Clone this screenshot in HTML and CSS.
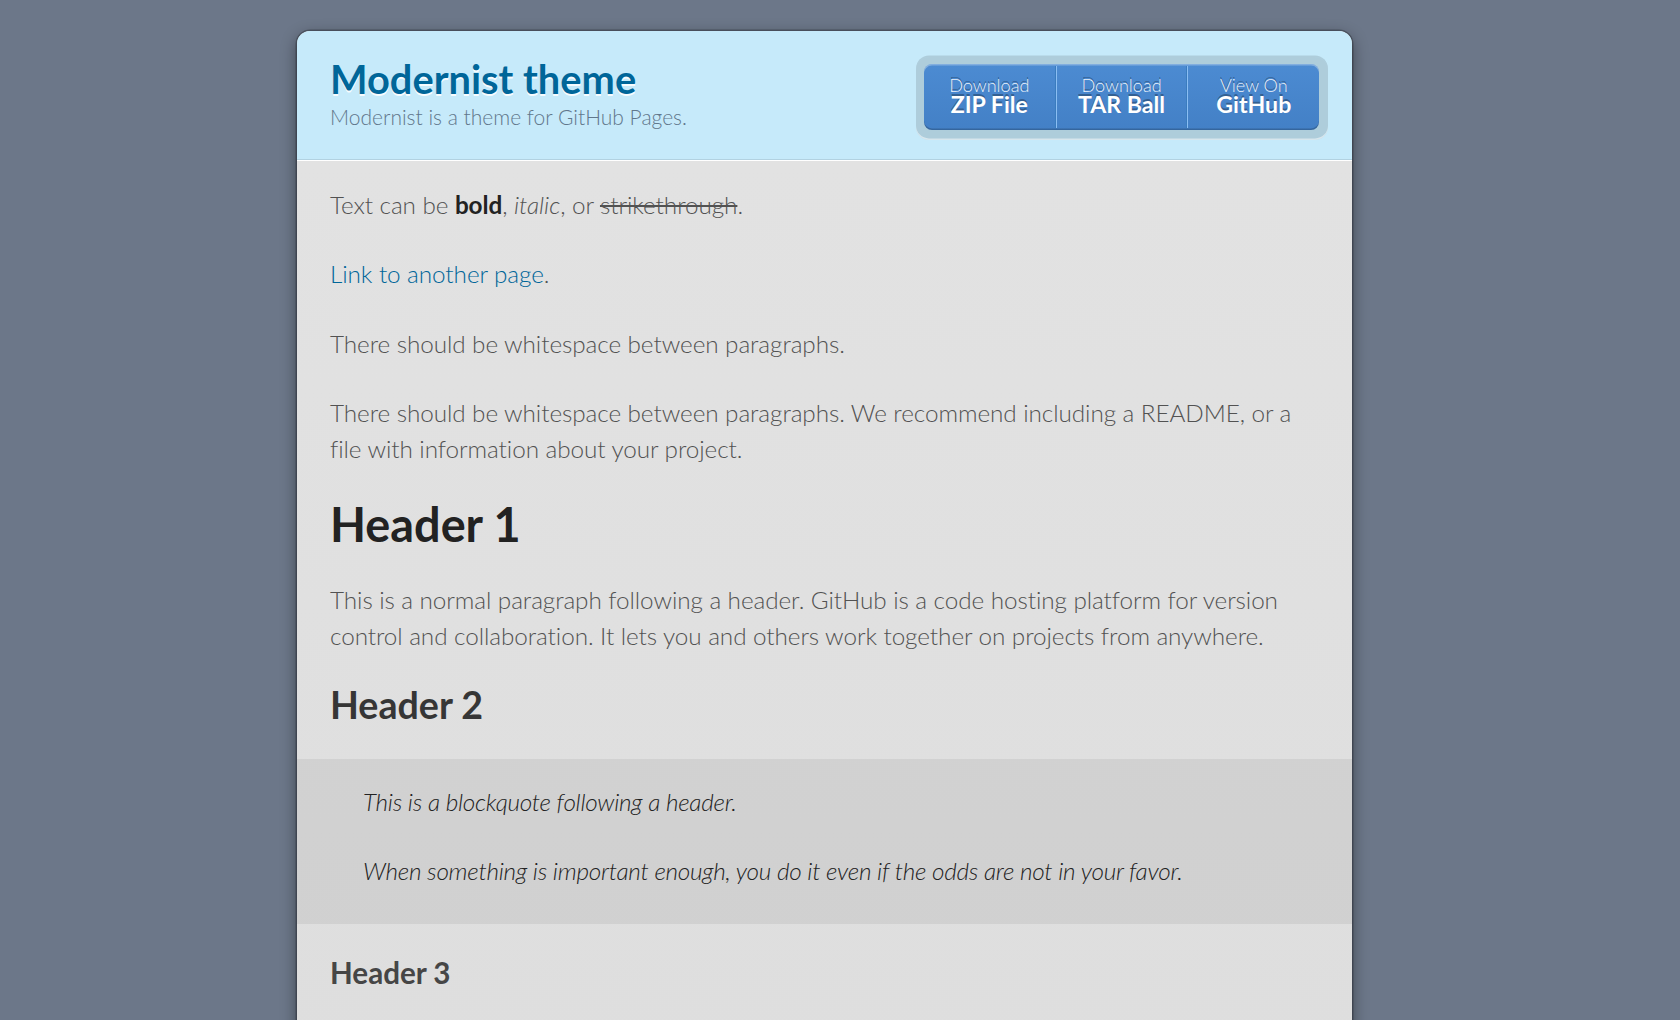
FILE: index.html
```html
<!DOCTYPE html>
<html lang="en">
<head>
<meta charset="utf-8">
<title>Modernist theme</title>
<link rel="stylesheet" href="styles.css">
</head>
<body>
<div class="wrapper">
  <header class="site-header">
    <div class="brand">
      <h1 class="site-title">Modernist theme</h1>
      <p class="site-desc">Modernist is a theme for GitHub Pages.</p>
    </div>
    <div class="downloads-frame">
      <ul class="downloads">
        <li class="dl dl-first"><a href="#"><span class="dl-small">Download</span><strong>ZIP File</strong></a></li>
        <li class="dl dl-mid"><a href="#"><span class="dl-small">Download</span><strong>TAR Ball</strong></a></li>
        <li class="dl dl-last"><a href="#"><span class="dl-small">View On</span><strong>GitHub</strong></a></li>
      </ul>
    </div>
  </header>
  <section class="content">
    <p>Text can be <strong>bold</strong>, <em>italic</em>, or <del>strikethrough</del>.</p>
    <p><a href="#">Link to another page</a>.</p>
    <p>There should be whitespace between paragraphs.</p>
    <p>There should be whitespace between paragraphs. We recommend including a README, or a file with information about your project.</p>
    <h1 class="h1">Header 1</h1>
    <p>This is a normal paragraph following a header. GitHub is a code hosting platform for version control and collaboration. It lets you and others work together on projects from anywhere.</p>
    <h2 class="h2">Header 2</h2>
    <blockquote class="quote">
      <p>This is a blockquote following a header.</p>
      <p>When something is important enough, you do it even if the odds are not in your favor.</p>
    </blockquote>
    <h3 class="h3">Header 3</h3>
  </section>
</div>
</body>
</html>
```
FILE: styles.css
```css
html, body {
  margin: 0;
  padding: 0;
}

body {
  background: #6c7789;
  font-family: Lato, "Noto Sans", sans-serif;
  font-weight: 300;
  color: #525252;
  font-size: 24.3px;
  line-height: 1.5;
}

.wrapper {
  width: 1055px;
  margin: 31px 0 0 297px;
  background: #dedede;
  border-radius: 13px;
  box-shadow: 0 0 0 1.5px rgba(0, 0, 0, 0.25), 0 5px 16px rgba(0, 0, 0, 0.45);
}

.site-header {
  display: flex;
  justify-content: space-between;
  align-items: flex-start;
  background: #c6eafa;
  border-radius: 13px 13px 0 0;
  padding: 24.2px 24.5px 27.9px 33px;
  border-bottom: 1px solid #b2d2e1;
}

.site-title {
  margin: 0;
  font-size: 39.8px;
  line-height: 1.2;
  font-weight: 700;
  color: #069;
  text-shadow: rgba(255, 255, 255, 0.9) 0 1.6px 0;
}

.site-desc {
  margin: 0;
  font-size: 21px;
  line-height: 28.5px;
  color: #61778b;
  font-weight: 300;
}

.downloads-frame {
  margin-top: 2.2px;
  margin-bottom: -14px;
  padding: 6.6px 8.2px 9.9px;
  background: rgba(0, 0, 0, 0.12);
  border-radius: 13px;
  box-shadow: 0 -1.6px 0 rgba(0, 0, 0, 0.12), inset 0 -1.6px 0 rgba(255, 255, 255, 0.5);
}

.downloads {
  display: flex;
  margin: 0;
  padding: 1.6px 0;
  list-style: none;
  background: linear-gradient(#4c8bd2, #4380c6);
  border-radius: 8px;
  box-shadow: inset 0 1.6px 0 rgba(255, 255, 255, 0.3), inset 0 -1.6px 0 rgba(0, 0, 0, 0.2);
}

.dl {
  box-sizing: border-box;
  height: 62.6px;
}

.dl-first {
  width: 132px;
  border-right: 1px solid #3a7cbe;
}

.dl-mid {
  width: 131.5px;
  border-left: 1px solid #8bbef3;
  border-right: 1px solid #3a7cbe;
}

.dl-last {
  width: 132px;
  border-left: 1px solid #8bbef3;
}

.dl a {
  display: flex;
  flex-direction: column;
  align-items: center;
  text-decoration: none;
  padding-top: 11.3px;
  text-shadow: rgba(0, 0, 0, 0.3) 0 -1.6px 0;
}

.dl-small {
  display: block;
  font-size: 18.1px;
  line-height: 16.5px;
  font-weight: 300;
  color: rgba(255, 255, 255, 0.9);
}

.dl a strong {
  display: block;
  font-size: 23.1px;
  line-height: 22px;
  font-weight: 700;
  color: #fff;
}

.content {
  border-top: 1px solid #fff;
  background: linear-gradient(#e2e2e2, #dedede);
  padding: 25.8px 33px 24.7px;
  border-radius: 0 0 13px 13px;
}

.content p {
  margin: 0 0 33px;
  line-height: 36.3px;
  letter-spacing: -0.07px;
}

.content strong {
  color: #222;
  font-weight: 700;
}

.content a {
  color: #069;
  text-decoration: none;
}

.h1 {
  margin: 0 0 33.7px;
  font-size: 46.8px;
  line-height: 47.6px;
  font-weight: 700;
  color: #222;
}

.h2 {
  margin: -2.7px 0 35.7px;
  font-size: 37.6px;
  line-height: 39px;
  font-weight: 700;
  color: #363636;
}

.h3 {
  margin: 0 0 33px;
  font-size: 29.6px;
  line-height: 32px;
  font-weight: 700;
  color: #464646;
}

.quote {
  margin: 0 -33px 33px;
  padding: 24.2px 33px 1.5px 66px;
  font-style: italic;
  background: rgba(0, 0, 0, 0.06);
  color: #222;
}

.quote p {
  letter-spacing: -0.25px;
}
```
